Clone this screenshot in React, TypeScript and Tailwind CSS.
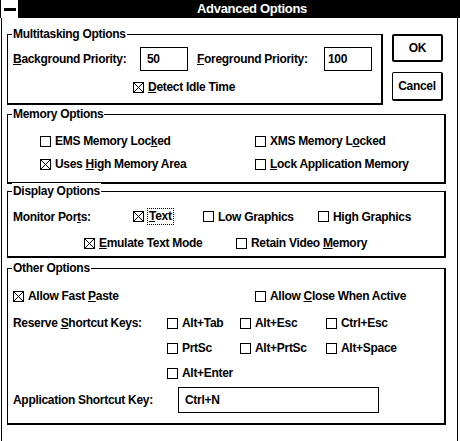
import React from "react";

const font = { fontFamily: "'Liberation Sans', Arial, sans-serif" };

function Box({ checked }: { checked?: boolean }) {
  return (
    <span className="relative inline-block w-[11px] h-[11px] border border-black bg-white shrink-0">
      {checked && (
        <svg className="absolute inset-0" width="9" height="9" viewBox="0 0 9 9">
          <path d="M0 0L9 9M9 0L0 9" stroke="black" strokeWidth="1" />
        </svg>
      )}
    </span>
  );
}

function Check({
  children,
  checked,
  className = "",
}: {
  children: React.ReactNode;
  checked?: boolean;
  className?: string;
}) {
  return (
    <label className={`flex items-center gap-[4px] ${className}`}>
      <Box checked={checked} />
      <span>{children}</span>
    </label>
  );
}

function Group({
  title,
  className = "",
  children,
}: {
  title: string;
  className?: string;
  children: React.ReactNode;
}) {
  return (
    <div className={`relative border-t border-l border-r-2 border-b-2 border-black ${className}`}>
      <span className="absolute -top-[9px] left-[4px] bg-white px-[1px] leading-[16px]">{title}</span>
      {children}
    </div>
  );
}

export default function App() {
  return (
    <div
      className="w-[460px] h-[441px] bg-white text-black text-[12px] font-bold tracking-[-0.3px] leading-[16px] whitespace-nowrap flex flex-col overflow-hidden"
      style={font}
    >
      {/* title bar */}
      <div className="h-[18px] flex shrink-0">
        <div className="w-[18px] h-[18px] bg-white border-l border-black flex items-center justify-center">
          <span className="block w-[12px] h-[3px] bg-black" />
        </div>
        <div className="flex-1 bg-black text-white text-[13px] pl-[179px] leading-[18px]">Advanced Options</div>
      </div>

      {/* window body */}
      <div className="flex-1 ml-[1px] w-[457px] border-l border-r border-black pl-[5px] pt-[16px]">
        <div className="flex items-start">
          <Group title="Multitasking Options" className="w-[376px] h-[71px] pt-[12px]">
            <div className="flex items-center h-[24px] pl-[5px]">
              <span className="w-[127px]">
                <u>B</u>ackground Priority:
              </span>
              <span className="w-[48px] h-[24px] border border-black flex items-center pl-[6px]">50</span>
              <span className="w-[136px] pl-[9px]">
                <u>F</u>oreground Priority:
              </span>
              <span className="w-[48px] h-[24px] border border-black flex items-center pl-[3px]">100</span>
            </div>
            <Check checked className="mt-[8px] ml-[125px]">
              <u>D</u>etect Idle Time
            </Check>
          </Group>
          <div className="ml-[9px] flex flex-col">
            <button className="w-[51px] h-[28px] border-2 border-black rounded-[2px] bg-white font-bold">OK</button>
            <button className="mt-[10px] w-[51px] h-[29px] border border-r-2 border-b-2 border-black rounded-[2px] bg-white font-bold">
              Cancel
            </button>
          </div>
        </div>

        <Group title="Memory Options" className="mt-[9px] w-[439px] h-[70px] pt-[18px] pl-[32px]">
          <div className="flex">
            <Check className="w-[215px]">
              EMS Memory Loc<u>k</u>ed
            </Check>
            <Check>
              XMS Memory L<u>o</u>cked
            </Check>
          </div>
          <div className="flex mt-[7px]">
            <Check checked className="w-[215px]">
              Uses <u>H</u>igh Memory Area
            </Check>
            <Check>
              <u>L</u>ock Application Memory
            </Check>
          </div>
        </Group>

        <Group title="Display Options" className="mt-[7px] w-[439px] h-[67px] pt-[16px] pl-[5px]">
          <div className="flex items-center">
            <span className="w-[120px]">
              Monitor Por<u>t</u>s:
            </span>
            <label className="flex items-center gap-[3px] w-[70px]">
              <Box checked />
              <span className="border border-dotted border-black px-[1px] leading-[15px]">
                <u>T</u>ext
              </span>
            </label>
            <Check className="w-[115px]">Low Graphics</Check>
            <Check>High Graphics</Check>
          </div>
          <div className="flex mt-[10px] pl-[71px]">
            <Check checked className="w-[152px]">
              <u>E</u>mulate Text Mode
            </Check>
            <Check>
              Retain Video <u>M</u>emory
            </Check>
          </div>
        </Group>

        <Group title="Other Options" className="mt-[10px] w-[439px] h-[157px] pt-[19px] pl-[5px]">
          <div className="flex">
            <Check checked className="w-[242px]">
              Allow Fast <u>P</u>aste
            </Check>
            <Check>
              Allow <u>C</u>lose When Active
            </Check>
          </div>
          <div className="flex mt-[11px]">
            <span className="w-[154px]">
              Reserve <u>S</u>hortcut Keys:
            </span>
            <div className="flex flex-col gap-[9px]">
              <div className="flex">
                <Check className="w-[73px]">Alt+Tab</Check>
                <Check className="w-[86px]">Alt+Esc</Check>
                <Check>Ctrl+Esc</Check>
              </div>
              <div className="flex">
                <Check className="w-[73px]">PrtSc</Check>
                <Check className="w-[86px]">Alt+PrtSc</Check>
                <Check>Alt+Space</Check>
              </div>
              <div className="flex">
                <Check>Alt+Enter</Check>
              </div>
            </div>
          </div>
          <div className="flex items-center mt-[6px]">
            <span className="w-[165px]">Application Shortcut Key:</span>
            <span className="w-[201px] h-[26px] border border-black flex items-center pl-[6px]">Ctrl+N</span>
          </div>
        </Group>
      </div>
    </div>
  );
}
